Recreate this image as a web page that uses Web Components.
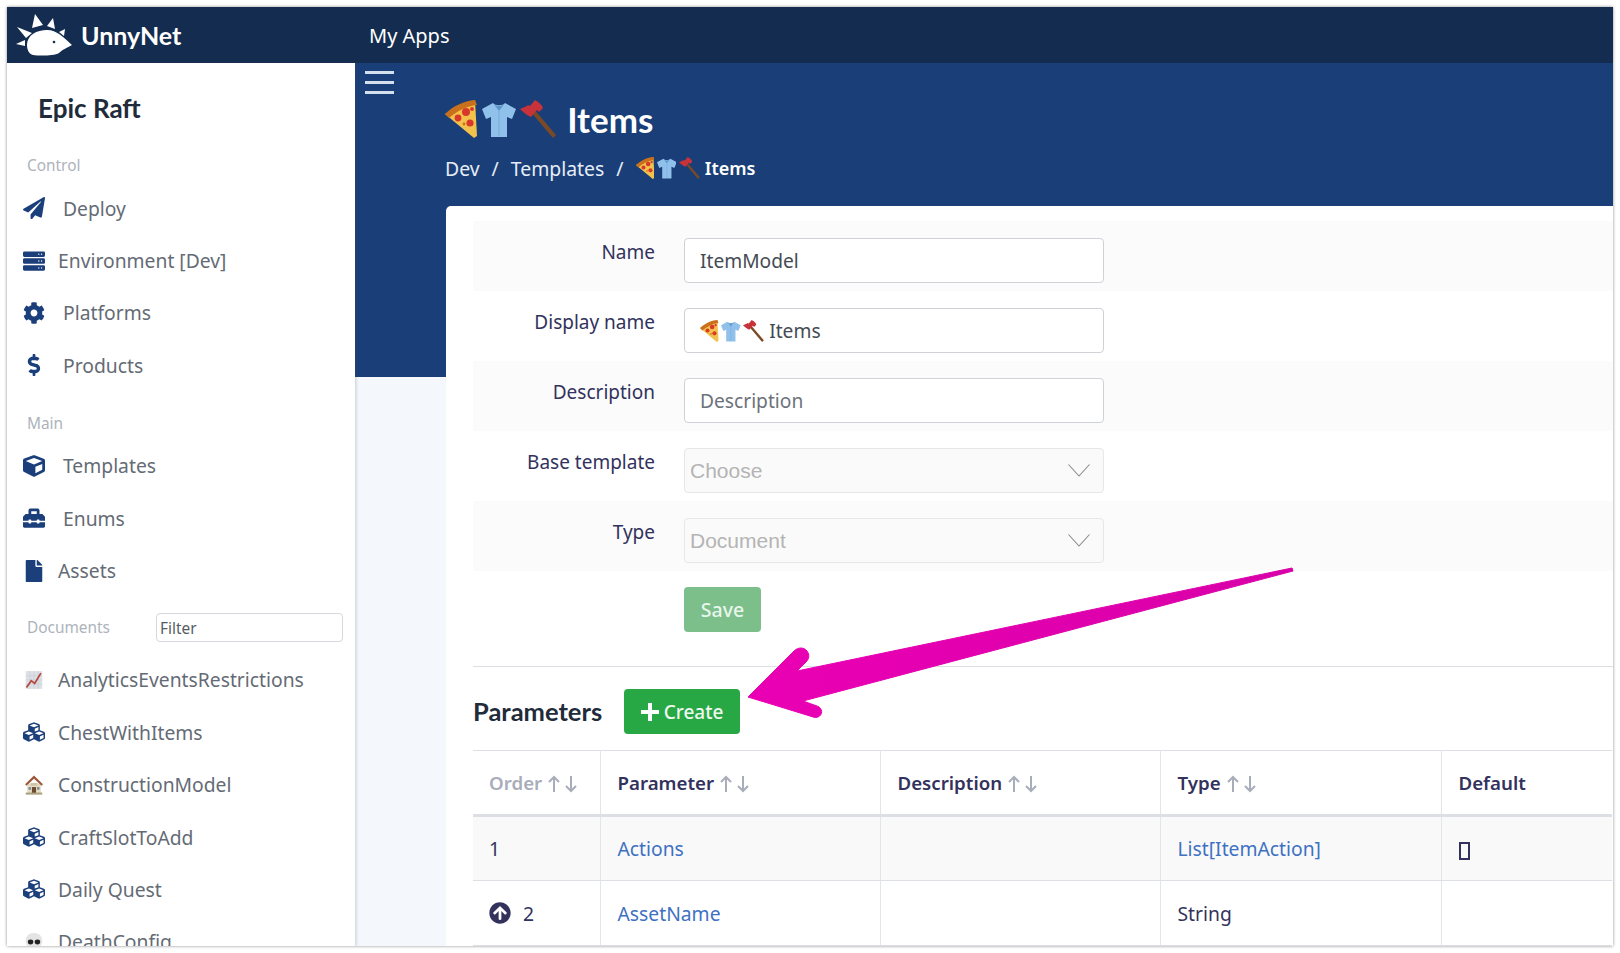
<!DOCTYPE html>
<html lang="en">
<head>
<meta charset="utf-8">
<title>UnnyNet</title>
<style>
  html, body { margin: 0; padding: 0; background: #fff; overflow: hidden; }
  body { font-family: "Noto Sans", sans-serif; --head: Lato, sans-serif; }
  un-app { margin: 7px; }
</style>
</head>
<body>
<un-app>
  <un-topbar slot="top"></un-topbar>
  <un-sidebar slot="side">
    <un-side-label>Control</un-side-label>
    <un-nav icon="plane">Deploy</un-nav>
    <un-nav icon="server" tight>Environment [Dev]</un-nav>
    <un-nav icon="cog">Platforms</un-nav>
    <un-nav icon="dollar">Products</un-nav>
    <un-side-label gap>Main</un-side-label>
    <un-nav icon="cube">Templates</un-nav>
    <un-nav icon="toolbox">Enums</un-nav>
    <un-nav icon="file" tight>Assets</un-nav>
    <un-doc-filter></un-doc-filter>
    <un-nav icon="chart" tight>AnalyticsEventsRestrictions</un-nav>
    <un-nav icon="cubes" tight>ChestWithItems</un-nav>
    <un-nav icon="house" tight>ConstructionModel</un-nav>
    <un-nav icon="cubes" tight>CraftSlotToAdd</un-nav>
    <un-nav icon="cubes" tight>Daily Quest</un-nav>
    <un-nav icon="skull" tight>DeathConfig</un-nav>
  </un-sidebar>
  <un-hero slot="main"></un-hero>
  <un-card slot="main">
    <un-form-row label="Name"><un-field>ItemModel</un-field></un-form-row>
    <un-form-row label="Display name"><un-field><un-emojis size="22"></un-emojis>&nbsp;Items</un-field></un-form-row>
    <un-form-row label="Description"><un-field muted>Description</un-field></un-form-row>
    <un-form-row label="Base template"><un-select>Choose</un-select></un-form-row>
    <un-form-row label="Type"><un-select>Document</un-select></un-form-row>
    <un-save></un-save>
    <un-params></un-params>
  </un-card>
  <un-arrow slot="over"></un-arrow>
</un-app>

<script>
// font awesome style glyphs, plus the few emoji that have no font here
const ICONS = {
  plane: ['0 0 512 512', '<path d="M476 3.2L12.5 270.6c-18.1 10.4-15.8 35.6 2.2 43.2L121 358.4l287.3-253.2c5.5-4.9 13.3 2.6 8.6 8.3L176 407v80.5c0 23.6 28.5 32.9 42.5 15.8L282 426l124.6 52.2c14.2 6 30.4-2.9 33-18.2l72-432C515 7.8 493.3-6.8 476 3.2z"/>'],
  server: ['0 0 512 512', '<path fill-rule="evenodd" d="M32 32h448a32 32 0 0 1 32 32v64a32 32 0 0 1-32 32H32a32 32 0 0 1-32-32V64a32 32 0 0 1 32-32zm400 48a16 16 0 1 0 0 32 16 16 0 0 0 0-32zm-64 0a16 16 0 1 0 0 32 16 16 0 0 0 0-32zM32 192h448a32 32 0 0 1 32 32v64a32 32 0 0 1-32 32H32a32 32 0 0 1-32-32v-64a32 32 0 0 1 32-32zm400 48a16 16 0 1 0 0 32 16 16 0 0 0 0-32zm-64 0a16 16 0 1 0 0 32 16 16 0 0 0 0-32zM32 352h448a32 32 0 0 1 32 32v64a32 32 0 0 1-32 32H32a32 32 0 0 1-32-32v-64a32 32 0 0 1 32-32zm400 48a16 16 0 1 0 0 32 16 16 0 0 0 0-32zm-64 0a16 16 0 1 0 0 32 16 16 0 0 0 0-32z"/>'],
  cog: ['0 0 512 512', '<path d="M487.4 315.7l-42.6-24.6c4.3-23.2 4.3-47 0-70.2l42.6-24.6c4.9-2.8 7.1-8.6 5.5-14-11.1-35.6-30-67.8-54.7-94.6-3.8-4.1-10-5.1-14.8-2.3L380.8 110c-17.9-15.4-38.5-27.3-60.8-35.1V25.8c0-5.6-3.9-10.5-9.4-11.7-36.7-8.2-74.3-7.8-109.2 0-5.5 1.2-9.4 6.1-9.4 11.7V75c-22.2 7.9-42.8 19.8-60.8 35.1L88.7 85.5c-4.9-2.8-11-1.9-14.8 2.3-24.7 26.7-43.6 58.9-54.7 94.6-1.7 5.4.6 11.2 5.5 14L67.3 221c-4.3 23.2-4.3 47 0 70.2l-42.6 24.6c-4.9 2.8-7.1 8.6-5.5 14 11.1 35.6 30 67.8 54.7 94.6 3.8 4.1 10 5.1 14.8 2.3l42.6-24.6c17.9 15.4 38.5 27.3 60.8 35.1v49.2c0 5.6 3.9 10.5 9.4 11.7 36.7 8.2 74.3 7.8 109.2 0 5.5-1.2 9.4-6.1 9.4-11.7v-49.2c22.2-7.9 42.8-19.8 60.8-35.1l42.6 24.6c4.9 2.8 11 1.9 14.8-2.3 24.7-26.7 43.6-58.9 54.7-94.6 1.5-5.5-.7-11.3-5.6-14.1zM256 336c-44.1 0-80-35.9-80-80s35.9-80 80-80 80 35.9 80 80-35.9 80-80 80z"/>'],
  dollar: ['0 0 288 512', '<path d="M209.2 233.4l-108-31.6C88.7 198.2 80 186.5 80 173.5c0-16.3 13.2-29.5 29.5-29.5h66.3c12.2 0 24.2 3.7 34.2 10.5 6.1 4.1 14.3 3.1 19.5-2l34.8-34c7.1-6.9 6.1-18.4-1.8-24.5C238 74.8 207.4 64.1 176 64V16c0-8.8-7.2-16-16-16h-32c-8.8 0-16 7.2-16 16v48h-2.5C45.8 64-5.4 118.7.5 183.6c4.2 46.1 39.4 83.6 83.8 96.6l102.5 30c12.5 3.7 21.2 15.3 21.2 28.3 0 16.3-13.2 29.5-29.5 29.5h-66.3C100 368 88 364.3 78 357.5c-6.1-4.1-14.3-3.1-19.5 2l-34.8 34c-7.1 6.9-6.1 18.4 1.8 24.5 24.5 19.2 55.1 29.9 86.5 30v48c0 8.8 7.2 16 16 16h32c8.8 0 16-7.2 16-16v-48.2c46.6-.9 90.3-28.6 105.7-72.7 21.5-61.6-14.6-124.8-72.5-141.7z"/>'],
  cube: ['0 0 512 512', '<path d="M239.1 6.3l-208 78c-18.7 7-31.1 25-31.1 45v225.1c0 18.2 10.3 34.8 26.5 42.9l208 104c13.5 6.8 29.4 6.8 42.9 0l208-104c16.3-8.1 26.5-24.8 26.5-42.9V129.3c0-20-12.4-37.9-31.1-44.9l-208-78C262 2.2 250 2.2 239.1 6.3zM256 68.4l192 72v1.1l-192 78-192-78v-1.1l192-72zm32 356V275.5l160-65v133.9l-160 80z"/>'],
  toolbox: ['0 0 512 512', '<path d="M502.63 214.63l-45.25-45.25c-6-6-14.14-9.37-22.63-9.37H384V80c0-26.51-21.49-48-48-48H176c-26.51 0-48 21.49-48 48v80H77.25c-8.49 0-16.62 3.37-22.63 9.37L9.37 214.63c-6 6-9.37 14.14-9.37 22.63V320h128v-16c0-8.84 7.16-16 16-16h32c8.84 0 16 7.16 16 16v16h128v-16c0-8.84 7.16-16 16-16h32c8.84 0 16 7.16 16 16v16h128v-82.75c0-8.48-3.37-16.62-9.37-22.62zM320 160H192V96h128v64zm64 208c0 8.84-7.16 16-16 16h-32c-8.84 0-16-7.16-16-16v-16H192v16c0 8.84-7.16 16-16 16h-32c-8.84 0-16-7.16-16-16v-16H0v96c0 17.67 14.33 32 32 32h448c17.67 0 32-14.33 32-32v-96H384v16z"/>'],
  file: ['0 0 384 512', '<path d="M224 136V0H24C10.7 0 0 10.7 0 24v464c0 13.3 10.7 24 24 24h336c13.3 0 24-10.7 24-24V160H248c-13.2 0-24-10.8-24-24zm160-14.1v6.1H256V0h6.1c6.4 0 12.5 2.5 17 7l97.9 98c4.5 4.5 7 10.6 7 16.9z"/>'],
  cubes: ['0 0 512 512', '<path d="M488.6 250.2L392 214V105.5c0-15-9.3-28.4-23.4-33.7l-100-37.5c-8.1-3.1-17.1-3.1-25.3 0l-100 37.5c-14.1 5.3-23.4 18.7-23.4 33.7V214l-96.6 36.2C9.3 255.5 0 268.9 0 283.9V394c0 13.6 7.7 26.1 19.9 32.2l100 50c10.1 5.1 22.1 5.1 32.2 0l103.9-52 103.9 52c10.1 5.1 22.1 5.1 32.2 0l100-50c12.2-6.1 19.9-18.6 19.9-32.2V283.9c0-15-9.3-28.4-23.4-33.7zM358 214.8l-85 31.9v-68.2l85-37v73.3zM154 104.1l102-38.2 102 38.2v.6l-102 41.4-102-41.4v-.6zm84 291.1l-85 42.5v-79.1l85-38.8v75.4zm0-112l-102 41.4-102-41.4v-.6l102-38.2 102 38.2v.6zm240 112l-85 42.5v-79.1l85-38.8v75.4zm0-112l-102 41.4-102-41.4v-.6l102-38.2 102 38.2v.6z"/>'],
  up: ['0 0 512 512', '<path d="M8 256C8 119 119 8 256 8s248 111 248 248-111 248-248 248S8 393 8 256zm143.6 28.9l72.4-75.5V392c0 13.3 10.7 24 24 24h16c13.3 0 24-10.7 24-24V209.4l72.4 75.5c9.3 9.7 24.8 9.9 34.3.4l10.9-11c9.4-9.4 9.4-24.6 0-33.9L273 107.7c-9.4-9.4-24.6-9.4-33.9 0L106.3 240.4c-9.4 9.4-9.4 24.6 0 33.9l10.9 11c9.6 9.5 25.1 9.3 34.4-.4z"/>'],
  chart: ['0 0 32 32', '<rect x="4" y="3" width="24" height="26" fill="#dde1e6"/><path d="M4 10h24M4 16h24M4 22h24M10 3v26M16 3v26M22 3v26" stroke="#c9ced5" stroke-width="1"/><path d="M5 27l7-10 5 4 9-15" fill="none" stroke="#b5463c" stroke-width="2.500"/>'],
  house: ['0 0 32 32', '<rect x="6" y="14" width="20" height="14" fill="#e5dcc6"/><path d="M3 15L16 2l13 13-2 2L16 7 5 17z" fill="#9c5a3c"/><path d="M11 13h10v4H11z" fill="#cfc3a8"/><rect x="13" y="19" width="6" height="9" fill="#6b4a2f"/><rect x="8" y="19" width="3.500" height="4" fill="#7d8a93"/><rect x="20.500" y="19" width="3.500" height="4" fill="#7d8a93"/><rect x="4" y="27" width="24" height="3" fill="#a9a27d"/>'],
  skull: ['0 0 32 32', '<path d="M16 3C8 3 4 8 4 15c0 4 2 7 5 8v5h14v-5c3-1 5-4 5-8 0-7-4-12-12-12z" fill="#e4e4e4"/><ellipse cx="11" cy="16" rx="4" ry="3.500" fill="#222"/><ellipse cx="21" cy="16" rx="4" ry="3.500" fill="#222"/>'],
  pizza: ['0 0 32 38', '<path d="M0 14L30 0l2 36-3 2z" fill="#f3c24c"/><path d="M0 14C8 6 19 1 30 0l2 5C22 6 12 11 4 18z" fill="#c9701d"/><circle cx="21" cy="12" r="4" fill="#d8392b"/><circle cx="27" cy="9" r="2" fill="#d8392b"/><circle cx="13" cy="18" r="3.400" fill="#d8392b"/><circle cx="25" cy="23" r="3.600" fill="#d8392b"/><circle cx="19" cy="24" r="1.400" fill="#c9701d"/>'],
  shirt: ['0 0 34 38', '<path d="M11 3L0 9l4 10 5-2v20h16V17l5 2 4-10-11-6c-2 3-10 3-12 0z" fill="#8fc1ea"/><path d="M11 3c2 4 10 4 12 0l-6 8z" fill="#5c95c8"/><path d="M17 11v25" stroke="#76aad8" stroke-width="1"/>'],
  axe: ['0 0 36 38', '<path d="M13 8l23 27-3 3L10 11z" fill="#7a4a26"/><path d="M15 0c4 2 7 5 8 8l-4 4-2-2-6 7C6 15 2 11 0 9l7-3 1-1 2 1z" fill="#c8323a"/>']
};

class UnIcon extends HTMLElement {
  connectedCallback() {
    const [box, body] = ICONS[this.getAttribute('name')];
    const size = +this.getAttribute('size') || 22;
    // emoji are taller than wide, their width comes from the viewBox
    const p = box.split(' ');
    const w = this.hasAttribute('fit') ? size * p[2] / p[3] : size;
    this.attachShadow({ mode: 'open' }).innerHTML = `
      <style>
        :host { display: inline-flex; align-items: center; justify-content: center; color: inherit; }
        svg { display: block; fill: currentColor; }
      </style>
      <svg width="${w}" height="${size}" viewBox="${box}">${body}</svg>`;
  }
}

class UnEmojis extends HTMLElement {
  connectedCallback() {
    const s = +this.getAttribute('size') || 32;
    this.attachShadow({ mode: 'open' }).innerHTML = `
      <style>:host { display: inline-flex; align-items: center; gap: ${(s * 0.12).toFixed(1)}px; vertical-align: middle; }</style>
      <un-icon fit name="pizza" size="${s}"></un-icon><un-icon fit name="shirt" size="${s}"></un-icon><un-icon fit name="axe" size="${s}"></un-icon>`;
  }
}

class UnApp extends HTMLElement {
  constructor() {
    super();
    this.attachShadow({ mode: 'open' }).innerHTML = `
      <style>
        :host { display: block; position: relative; width: 1606px; height: 939px; overflow: hidden; background: #f4f7fb; box-shadow: 0 0 3px rgba(0,0,0,.45); }
        .body { display: grid; grid-template-columns: 348px 1fr; height: 883px; }
        main { min-width: 0; overflow: hidden; }
      </style>
      <slot name="top"></slot>
      <div class="body">
        <slot name="side"></slot>
        <main><slot name="main"></slot></main>
      </div>
      <slot name="over"></slot>`;
  }
}

class UnTopbar extends HTMLElement {
  constructor() {
    super();
    this.attachShadow({ mode: 'open' }).innerHTML = `
      <style>
        :host { display: flex; align-items: center; height: 56px; background: #142c4f; color: #fff; }
        .brand { display: flex; align-items: center; width: 362px; flex: none; gap: 7px; padding-left: 9px; box-sizing: border-box; }
        .name { font: 700 25px/1 var(--head); }
        .apps { font-size: 20px; }
        svg { display: block; fill: #fff; }
      </style>
      <div class="brand">
        <svg width="58" height="44" viewBox="17 12 58 44">
          <path d="M28 44C28 34 38 29 48 29c10 0 16 7 25 15-5 3-9 4-13 8-5 3-20 3-26 2-4-1-6-5-6-10z"/>
          <path d="M36 13l8 11-11 3zM54 17l2 11-8-3zM66 28l-1 7-5-4zM18 26l15 6-6 5zM17 43l9-4v6z"/>
          <circle cx="55" cy="41" r="1.300" fill="#142c4f"/>
        </svg>
        <span class="name">UnnyNet</span>
      </div>
      <span class="apps">My Apps</span>`;
  }
}

class UnSidebar extends HTMLElement {
  constructor() {
    super();
    this.attachShadow({ mode: 'open' }).innerHTML = `
      <style>
        :host { display: block; background: #fff; overflow: hidden; height: 883px; box-shadow: 1px 0 3px rgba(60,80,110,.25); position: relative; }
        h2 { margin: 0; height: 93px; box-sizing: border-box; padding: 0 0 4px 31px; display: flex; align-items: center; font: 700 26px/1 var(--head); color: #212b3a; }
      </style>
      <h2>Epic Raft</h2>
      <slot></slot>`;
  }
}

class UnSideLabel extends HTMLElement {
  constructor() {
    super();
    this.attachShadow({ mode: 'open' }).innerHTML = `
      <style>
        :host { display: block; height: 26px; box-sizing: border-box; padding: 1px 0 0 20px; font-size: 15.400px; line-height: 18px; color: #adb3bb; }
        :host([gap]) { height: 48px; padding-top: 23px; }
      </style>
      <slot></slot>`;
  }
}

class UnNav extends HTMLElement {
  constructor() {
    super();
    const icon = this.getAttribute('icon');
    this.attachShadow({ mode: 'open' }).innerHTML = `
      <style>
        :host { display: flex; align-items: center; height: 52.400px; padding-left: 16px; gap: 18px; font-size: 19.300px; color: #646b75; white-space: nowrap; }
        :host([tight]) { gap: 13px; }
        un-icon { width: 22px; flex: none; color: #1b3f7a; }
      </style>
      <un-icon name="${icon}" size="22"></un-icon><slot></slot>`;
  }
}

class UnDocFilter extends HTMLElement {
  constructor() {
    super();
    this.attachShadow({ mode: 'open' }).innerHTML = `
      <style>
        :host { display: flex; align-items: center; height: 57px; box-sizing: border-box; padding: 16px 12px 12px 20px; font-size: 15.400px; color: #adb3bb; }
        span { width: 129px; flex: none; }
        .f { flex: 1; height: 29px; box-sizing: border-box; border: 1px solid #d5d8dc; border-radius: 4px; padding-left: 3px; font-size: 15.400px; line-height: 29px; color: #555b63; }
      </style>
      <span>Documents</span><div class="f">Filter</div>`;
  }
}

class UnHero extends HTMLElement {
  constructor() {
    super();
    this.attachShadow({ mode: 'open' }).innerHTML = `
      <style>
        :host { display: block; height: 314px; box-sizing: border-box; background: #1a3e77; color: #fff; padding: 8px 0 0 10px; }
        .burger { width: 29px; display: flex; flex-direction: column; gap: 7px; }
        .burger i { display: block; height: 3px; background: #d5e0ef; }
        .head { margin: 2px 0 0 80px; }
        h1 { margin: 0; height: 46px; display: flex; align-items: center; gap: 11px; font: 700 35px/1 var(--head); }
        nav { display: flex; align-items: center; gap: 12px; margin-top: 11px; height: 30px; font-size: 19.400px; color: #e6edf7; }
        nav b { font-weight: 600; font-size: 18px; color: #fff; margin-left: -7px; }
      </style>
      <div class="burger"><i></i><i></i><i></i></div>
      <div class="head">
        <h1><un-emojis size="38"></un-emojis>Items</h1>
        <nav><span>Dev</span><span>/</span><span>Templates</span><span>/</span><un-emojis size="22"></un-emojis><b>Items</b></nav>
      </div>`;
  }
}

class UnCard extends HTMLElement {
  constructor() {
    super();
    this.attachShadow({ mode: 'open' }).innerHTML = `
      <style>
        :host { display: block; margin: -171px 0 0 91px; height: 800px; padding: 15px 0 0 27px; background: #fff; border-radius: 5px 0 0 0; box-sizing: border-box; }
      </style>
      <slot></slot>`;
  }
}

class UnFormRow extends HTMLElement {
  constructor() {
    super();
    this.attachShadow({ mode: 'open' }).innerHTML = `
      <style>
        :host { display: flex; height: 70px; box-sizing: border-box; padding-top: 17px; color: #32325d; font-size: 19px; }
        :host(:nth-of-type(odd)) { background: #fbfbfb; }
        label { width: 182px; flex: none; text-align: right; line-height: 28px; }
        div { margin-left: 29px; width: 420px; }
      </style>
      <label>${this.getAttribute('label')}</label><div><slot></slot></div>`;
  }
}

class UnField extends HTMLElement {
  constructor() {
    super();
    this.attachShadow({ mode: 'open' }).innerHTML = `
      <style>
        :host { display: flex; align-items: center; height: 45px; box-sizing: border-box; background: #fff; border: 1px solid #cfd2d6; border-radius: 4px; padding-left: 15px; font-size: 19.200px; color: #454b54; }
        :host([muted]) { color: #6c727a; }
      </style>
      <slot></slot>`;
  }
}

class UnSelect extends HTMLElement {
  constructor() {
    super();
    this.attachShadow({ mode: 'open' }).innerHTML = `
      <style>
        :host { display: flex; align-items: center; justify-content: space-between; height: 45px; box-sizing: border-box; background: #fafafa; border: 1px solid #e6e7e8; border-radius: 4px; padding: 0 13px 0 5px; font: 21px "Liberation Sans", sans-serif; color: #b4b4b4; }
        svg { display: block; }
      </style>
      <span><slot></slot></span>
      <svg width="22" height="13" viewBox="0 0 22 13"><path d="M.5.5L11 12 21.500.5" fill="none" stroke="#8a8a8a" stroke-width="1.100"/></svg>`;
  }
}

class UnSave extends HTMLElement {
  constructor() {
    super();
    this.attachShadow({ mode: 'open' }).innerHTML = `
      <style>
        :host { display: block; padding: 16px 0 0 211px; height: 96px; box-sizing: border-box; border-bottom: 1px solid #dcdfe3; }
        button { all: unset; display: flex; align-items: center; justify-content: center; width: 77px; height: 45px; background: #7cbf8b; border-radius: 4px; color: #e9f5ec; font: 500 19.500px "Noto Sans", sans-serif; }
      </style>
      <button>Save</button>`;
  }
}

class UnParams extends HTMLElement {
  constructor() {
    super();
    const sort = `<svg class="sort" width="32" height="18" viewBox="0 0 32 18"><path d="M7 17V2M2 7l5-5 5 5" /><path d="M24 1v15M19 11l5 5 5-5"/></svg>`;
    this.attachShadow({ mode: 'open' }).innerHTML = `
      <style>
        :host { display: block; color: #32325d; font-size: 19.300px; }
        .bar { display: flex; align-items: center; height: 45px; padding: 22px 0 16px; }
        h3 { margin: 0; width: 151px; font: 700 25.500px/1 var(--head); color: #212b3a; }
        .create { display: flex; align-items: center; justify-content: center; gap: 5px; width: 116px; height: 45px; background: #28a745; border-radius: 4px; color: #eef9f0; font-weight: 500; font-size: 19px; }
        .create svg { display: block; }
        table { border-collapse: collapse; table-layout: fixed; width: 1139px; border-top: 1px solid #dcdfe3; }
        th, td { border-left: 1px solid #e3e5e8; box-sizing: border-box; padding: 0 0 0 17px; text-align: left; }
        th:first-child, td:first-child { border-left: 0; padding-left: 16px; }
        th { height: 65px; font-weight: 600; font-size: 18.700px; border-bottom: 3px solid #dcdfe3; white-space: nowrap; }
        th.off { color: #a9adba; }
        td { height: 65px; border-bottom: 1px solid #dcdfe3; }
        tr.alt td { background: #f9f9fa; }
        a { color: #3e71c2; text-decoration: none; }
        .sort { vertical-align: -3px; margin-left: 5px; fill: none; stroke: #a9adba; stroke-width: 2; }
        .o { display: flex; align-items: center; gap: 12px; }
        un-icon { color: #32325d; }
        .tofu { display: inline-block; width: 11px; height: 18px; border: 2px solid #32325d; box-sizing: border-box; vertical-align: -4px; }
      </style>
      <div class="bar">
        <h3>Parameters</h3>
        <div class="create"><svg width="18" height="18" viewBox="0 0 18 18"><path d="M9 0v18M0 9h18" stroke="#fff" stroke-width="4"/></svg><span>Create</span></div>
      </div>
      <table>
        <colgroup><col style="width:127px"><col style="width:280px"><col style="width:280px"><col style="width:281px"><col></colgroup>
        <tr>
          <th class="off">Order${sort}</th><th>Parameter${sort}</th><th>Description${sort}</th><th>Type${sort}</th><th>Default</th>
        </tr>
        <tr class="alt"><td>1</td><td><a>Actions</a></td><td></td><td><a>List[ItemAction]</a></td><td><span class="tofu" role="img" aria-label="empty list"></span></td></tr>
        <tr><td><div class="o"><un-icon name="up" size="22"></un-icon>2</div></td><td><a>AssetName</a></td><td></td><td>String</td><td></td></tr>
      </table>`;
  }
}

class UnArrow extends HTMLElement {
  constructor() {
    super();
    this.attachShadow({ mode: 'open' }).innerHTML = `
      <style>
        :host { position: absolute; left: 733px; top: 553px; pointer-events: none; }
        svg { display: block; }
      </style>
      <svg width="570" height="170" viewBox="740 560 570 170">
        <defs><linearGradient id="g" x1="0" y1="0" x2="1" y2="0"><stop offset="0" stop-color="#ea00b4"/><stop offset="1" stop-color="#d800a8"/></linearGradient></defs>
        <path fill="url(#g)" stroke="url(#g)" stroke-width="1" stroke-linejoin="round" d="M748 697L794 651C798 647 804 647 807 651C810 655 809 659 806 662L797 671L1292 568L1293 571L803 701L817 706C823 708 823 715 818 717C815 718 813 717 810 716Z"/>
      </svg>`;
  }
}

customElements.define('un-icon', UnIcon);
customElements.define('un-emojis', UnEmojis);
customElements.define('un-app', UnApp);
customElements.define('un-topbar', UnTopbar);
customElements.define('un-sidebar', UnSidebar);
customElements.define('un-side-label', UnSideLabel);
customElements.define('un-nav', UnNav);
customElements.define('un-doc-filter', UnDocFilter);
customElements.define('un-hero', UnHero);
customElements.define('un-card', UnCard);
customElements.define('un-form-row', UnFormRow);
customElements.define('un-field', UnField);
customElements.define('un-select', UnSelect);
customElements.define('un-save', UnSave);
customElements.define('un-params', UnParams);
customElements.define('un-arrow', UnArrow);
</script>
</body>
</html>
